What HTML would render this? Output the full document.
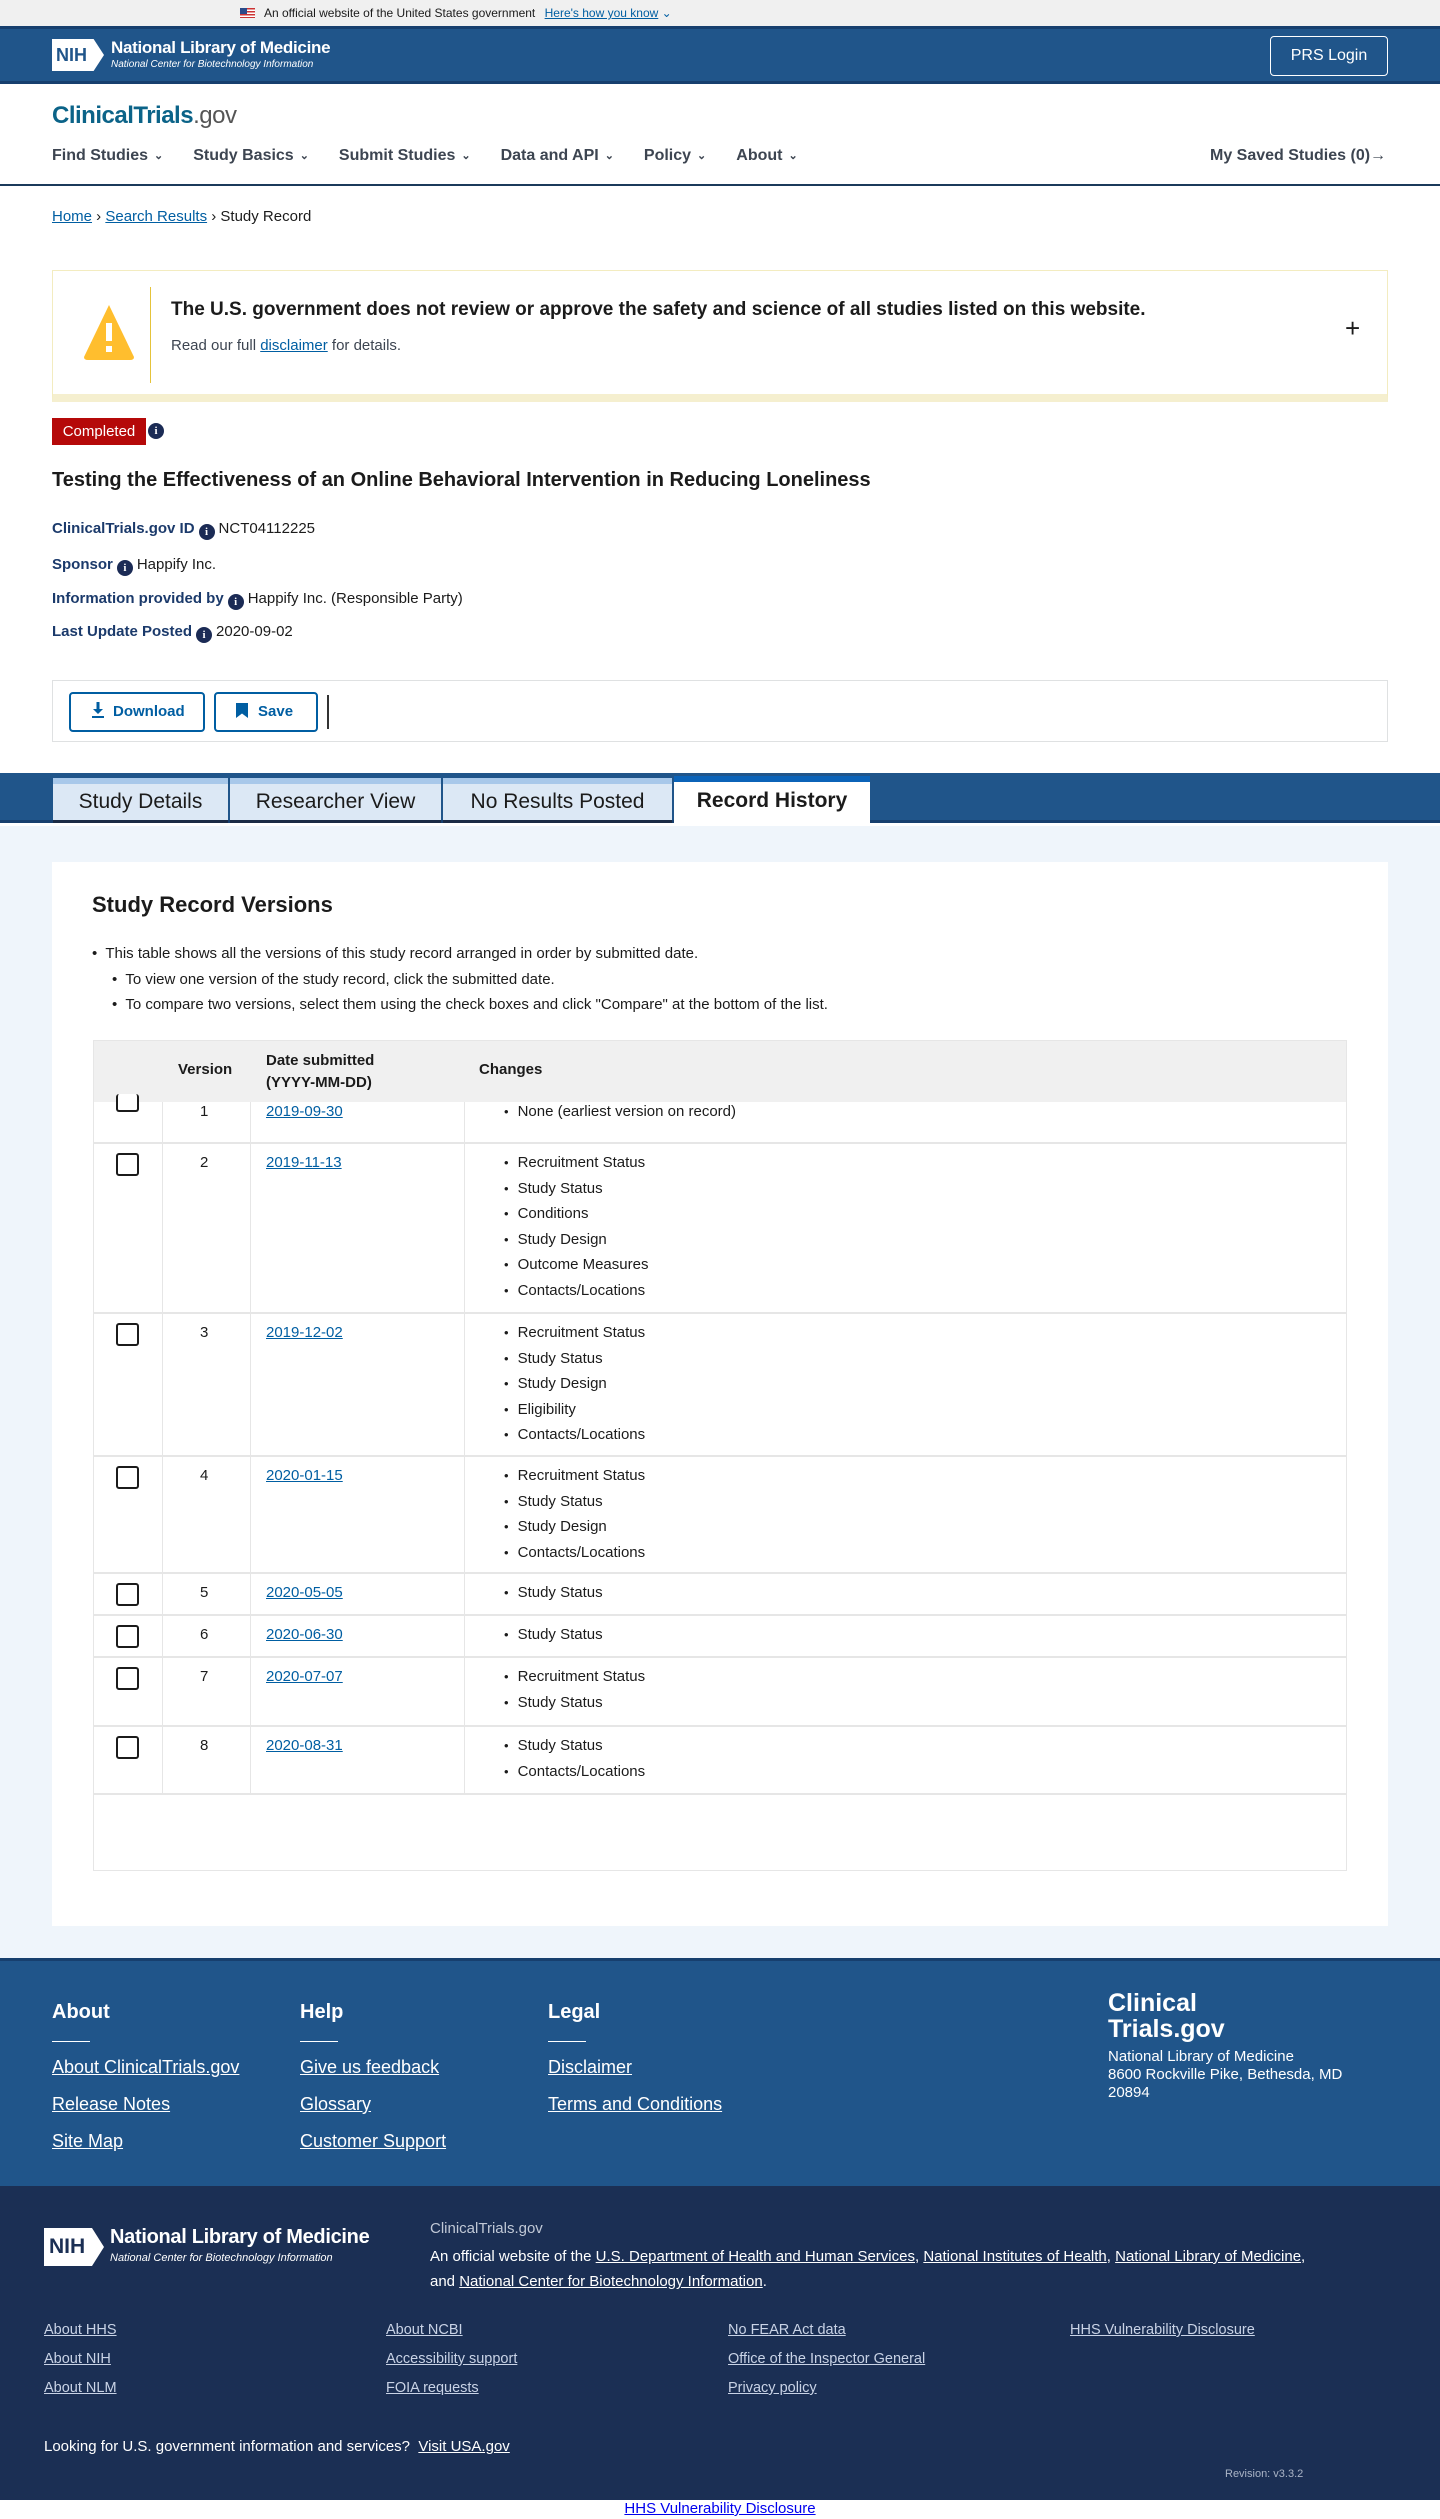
<!DOCTYPE html>
<html><head><meta charset="utf-8">
<style>
*{box-sizing:border-box;margin:0;padding:0}
body{width:1440px;height:2519px;position:relative;font-family:"Liberation Sans",Arial,sans-serif;color:#1b1b1b;font-size:16px;background:#fff;overflow:hidden}
.a{position:absolute}
a{color:#005ea2;text-decoration:underline}
.i{display:inline-block;width:16px;height:16px;border-radius:50%;background:#1b2b55;color:#fff;font:bold 11px/16px "Liberation Serif",serif;text-align:center;vertical-align:-2px;margin:0 4px}
.lbl{color:#1b3a6b;font-weight:bold;font-size:15px}
.row{position:absolute;left:0;width:100%;border-bottom:2px solid #e6e6e6}
.cb{position:absolute;left:22px;width:23px;height:23px;border:2px solid #1b1b1b;border-radius:3px;background:#fff}
.v{position:absolute;left:106px;font-size:15px}
.d{position:absolute;left:172px;font-size:15px}
.ch{position:absolute;left:410px;font-size:15px;line-height:25.5px;list-style:none}
.ch li:before{content:"•";margin-right:9px;font-size:13px}
.fl a{color:#fff;font-size:18px;display:block;margin-bottom:16px}
.fb a{color:#c9d3e6;font-size:14.5px;display:block;margin-bottom:13px}
.cv{font-size:11px;margin-left:6px;vertical-align:1px}
</style></head><body>

<div class="a" style="left:0;top:0;width:1440px;height:26px;background:#f0f0f0;font-size:12px;line-height:26px">
 <span class="a" style="left:240px;top:8px;width:15px;height:10px;background:repeating-linear-gradient(#c33 0 1.5px,#fff 1.5px 3px)"><span style="position:absolute;left:0;top:0;width:7px;height:6px;background:#2a4a8a"></span></span>
 <span class="a" style="left:264px">An official website of the United States government <a style="margin-left:6px">Here's how you know</a> <span style="color:#005ea2">⌄</span></span>
</div>
<div class="a" style="left:0;top:26px;width:1440px;height:58px;background:#20558a;border-top:3px solid #173f6e;border-bottom:3px solid #173f6e">
 <div class="a" style="left:52px;top:10px;width:52px;height:32px;background:#fff;color:#20558a;font:bold 18px/32px 'Liberation Sans';padding-left:4px;clip-path:polygon(0 0,80% 0,100% 50%,80% 100%,0 100%)">NIH</div>
 <div class="a" style="left:111px;top:9px;color:#fff;font-size:17px;font-weight:bold;letter-spacing:-0.3px">National Library of Medicine</div>
 <div class="a" style="left:111px;top:30px;color:#fff;font-size:10px;font-style:italic">National Center for Biotechnology Information</div>
 <div class="a" style="left:1270px;top:7px;width:118px;height:40px;border:1.5px solid #fff;border-radius:4px;color:#fff;font-size:16px;line-height:37px;text-align:center">PRS Login</div>
</div>
<div class="a" style="left:52px;top:102px;font-size:24px;font-weight:bold;color:#0b6388;letter-spacing:-0.5px">ClinicalTrials<span style="color:#555;font-weight:normal">.gov</span></div>
<div class="a" style="left:52px;top:147px;font-size:16px;font-weight:bold;color:#3d4551">
 <span style="margin-right:30px">Find Studies<span class="cv">⌄</span></span><span style="margin-right:30px">Study Basics<span class="cv">⌄</span></span><span style="margin-right:30px">Submit Studies<span class="cv">⌄</span></span><span style="margin-right:30px">Data and API<span class="cv">⌄</span></span><span style="margin-right:30px">Policy<span class="cv">⌄</span></span><span>About<span class="cv">⌄</span></span>
</div>
<div class="a" style="left:1210px;top:147px;font-size:16px;font-weight:bold;color:#3d4551">My Saved Studies (0)<span style="font-weight:normal">→</span></div>
<div class="a" style="left:0;top:184px;width:1440px;height:2px;background:#1b3a5b"></div>
<div class="a" style="left:52px;top:208px;font-size:15px"><a>Home</a> › <a>Search Results</a> › Study Record</div>

<div class="a" style="left:52px;top:270px;width:1336px;height:132px;border:1px solid #f3ecc0;border-bottom:8px solid #f5efcf;background:#fff">
 <svg class="a" style="left:29px;top:32px" width="54" height="58" viewBox="0 0 54 58"><path d="M27 2 L52 54 Q52 57 48 57 L6 57 Q2 57 2 54 Z" fill="#ffbe2e"/><rect x="24" y="20" width="6" height="18" fill="#fff"/><rect x="24" y="43" width="6" height="6" fill="#fff"/></svg>
 <div class="a" style="left:97px;top:16px;width:1px;height:96px;background:#e5c33a"></div>
 <div class="a" style="left:118px;top:28px;font-size:19px;font-weight:bold">The U.S. government does not review or approve the safety and science of all studies listed on this website.</div>
 <div class="a" style="left:118px;top:66px;font-size:15px;color:#3d4551">Read our full <a>disclaimer</a> for details.</div>
 <div class="a" style="left:1292px;top:42px;font-size:26px">+</div>
</div>

<div class="a" style="left:52px;top:418px;width:94px;height:27px;background:#b50909;color:#fff;font-size:15px;line-height:27px;text-align:center">Completed</div>
<span class="i a" style="left:148px;top:423px;margin:0">i</span>
<div class="a" style="left:52px;top:469px;font-size:20px;font-weight:bold;color:#1b1b1b">Testing the Effectiveness of an Online Behavioral Intervention in Reducing Loneliness</div>
<div class="a" style="left:52px;top:520px;font-size:15px"><span class="lbl">ClinicalTrials.gov ID</span><span class="i">i</span>NCT04112225</div>
<div class="a" style="left:52px;top:556px;font-size:15px"><span class="lbl">Sponsor</span><span class="i">i</span>Happify Inc.</div>
<div class="a" style="left:52px;top:590px;font-size:15px"><span class="lbl">Information provided by</span><span class="i">i</span>Happify Inc. (Responsible Party)</div>
<div class="a" style="left:52px;top:623px;font-size:15px"><span class="lbl">Last Update Posted</span><span class="i">i</span>2020-09-02</div>

<div class="a" style="left:52px;top:680px;width:1336px;height:62px;border:1px solid #dfe1e2">
 <div class="a" style="left:16px;top:11px;width:136px;height:40px;border:2px solid #005ea2;border-radius:4px;color:#005ea2;font-weight:bold;font-size:15px;line-height:36px;padding-left:20px"><svg width="14" height="16" viewBox="0 0 14 16" style="vertical-align:-2px;margin-right:8px"><path d="M5.5 0h3v7h3.5L7 12 2 7h3.5z" fill="#005ea2"/><rect x="1" y="14" width="12" height="2" fill="#005ea2"/></svg>Download</div>
 <div class="a" style="left:161px;top:11px;width:104px;height:40px;border:2px solid #005ea2;border-radius:4px;color:#005ea2;font-weight:bold;font-size:15px;line-height:36px;padding-left:20px"><span style="display:inline-block;width:12px;height:15px;background:#005ea2;clip-path:polygon(0 0,100% 0,100% 100%,50% 70%,0 100%);vertical-align:-2px;margin-right:10px"></span>Save</div>
 <div class="a" style="left:274px;top:14px;width:2px;height:34px;background:#333"></div>
</div>

<div class="a" style="left:0;top:773px;width:1440px;height:50px;background:#20558a;border-bottom:3px solid #173f6e"></div>
<div class="a" style="left:53px;top:778px;width:175px;height:45px;background:#dce8f5;border-top:6px solid #a8c8ea;border-bottom:3px solid #1b2b45;font-size:21px;line-height:36px;text-align:center">Study Details</div>
<div class="a" style="left:230px;top:778px;width:211px;height:45px;background:#dce8f5;border-top:6px solid #a8c8ea;border-bottom:3px solid #1b2b45;font-size:21px;line-height:36px;text-align:center">Researcher View</div>
<div class="a" style="left:443px;top:778px;width:229px;height:45px;background:#dce8f5;border-top:6px solid #a8c8ea;border-bottom:3px solid #1b2b45;font-size:21px;line-height:36px;text-align:center">No Results Posted</div>
<div class="a" style="left:674px;top:776px;width:196px;height:50px;background:#fff;border-top:6px solid #0b63b8;font-size:21px;font-weight:bold;line-height:38px;text-align:center">Record History</div>

<div class="a" style="left:0;top:826px;width:1440px;height:1134px;background:#eff5fb"></div>
<div class="a" style="left:52px;top:862px;width:1336px;height:1064px;background:#fff">
 <div class="a" style="left:40px;top:30px;font-size:22px;font-weight:bold">Study Record Versions</div>
 <div class="a" style="left:40px;top:79px;font-size:15px;line-height:25.5px">
  <div>•&nbsp; This table shows all the versions of this study record arranged in order by submitted date.</div>
  <div style="padding-left:20px">•&nbsp; To view one version of the study record, click the submitted date.</div>
  <div style="padding-left:20px">•&nbsp; To compare two versions, select them using the check boxes and click "Compare" at the bottom of the list.</div>
 </div>
 <div class="a" style="left:41px;top:178px;width:1254px;height:831px;border:1px solid #e6e6e6">
  <div class="a" style="left:68px;top:0;width:1px;height:752px;background:#e6e6e6"></div>
  <div class="a" style="left:156px;top:0;width:1px;height:752px;background:#e6e6e6"></div>
  <div class="a" style="left:370px;top:0;width:1px;height:752px;background:#e6e6e6"></div>
  <div class="row" style="top:0;height:61px;background:#f0f0f0;border:0;font-weight:bold;font-size:15px">
   <div class="a" style="left:84px;top:20px">Version</div>
   <div class="a" style="left:172px;top:9px;line-height:22px">Date submitted<br>(YYYY-MM-DD)</div>
   <div class="a" style="left:385px;top:20px">Changes</div>
  </div>
  <div class="row" style="top:61px;height:42px"><div class="cb" style="top:-8px;height:18px;border-top:0"></div><div class="v" style="top:1px">1</div><div class="d" style="top:1px"><a>2019-09-30</a></div><ul class="ch" style="top:-3px"><li>None (earliest version on record)</li></ul></div>
  <div class="row" style="top:103px;height:170px"><div class="cb" style="top:9px"></div><div class="v" style="top:10px">2</div><div class="d" style="top:10px"><a>2019-11-13</a></div><ul class="ch" style="top:6px"><li>Recruitment Status</li><li>Study Status</li><li>Conditions</li><li>Study Design</li><li>Outcome Measures</li><li>Contacts/Locations</li></ul></div>
  <div class="row" style="top:273px;height:143px"><div class="cb" style="top:9px"></div><div class="v" style="top:10px">3</div><div class="d" style="top:10px"><a>2019-12-02</a></div><ul class="ch" style="top:6px"><li>Recruitment Status</li><li>Study Status</li><li>Study Design</li><li>Eligibility</li><li>Contacts/Locations</li></ul></div>
  <div class="row" style="top:416px;height:117px"><div class="cb" style="top:9px"></div><div class="v" style="top:10px">4</div><div class="d" style="top:10px"><a>2020-01-15</a></div><ul class="ch" style="top:6px"><li>Recruitment Status</li><li>Study Status</li><li>Study Design</li><li>Contacts/Locations</li></ul></div>
  <div class="row" style="top:533px;height:42px"><div class="cb" style="top:9px"></div><div class="v" style="top:10px">5</div><div class="d" style="top:10px"><a>2020-05-05</a></div><ul class="ch" style="top:6px"><li>Study Status</li></ul></div>
  <div class="row" style="top:575px;height:42px"><div class="cb" style="top:9px"></div><div class="v" style="top:10px">6</div><div class="d" style="top:10px"><a>2020-06-30</a></div><ul class="ch" style="top:6px"><li>Study Status</li></ul></div>
  <div class="row" style="top:617px;height:69px"><div class="cb" style="top:9px"></div><div class="v" style="top:10px">7</div><div class="d" style="top:10px"><a>2020-07-07</a></div><ul class="ch" style="top:6px"><li>Recruitment Status</li><li>Study Status</li></ul></div>
  <div class="row" style="top:686px;height:68px"><div class="cb" style="top:9px"></div><div class="v" style="top:10px">8</div><div class="d" style="top:10px"><a>2020-08-31</a></div><ul class="ch" style="top:6px"><li>Study Status</li><li>Contacts/Locations</li></ul></div>
 </div>
</div>

<div class="a" style="left:0;top:1958px;width:1440px;height:228px;background:#20558a;border-top:3px solid #173f6e;color:#fff">
 <div class="a" style="left:52px;top:40px;font-size:20px;font-weight:bold">About</div>
 <div class="a" style="left:300px;top:40px;font-size:20px;font-weight:bold">Help</div>
 <div class="a" style="left:548px;top:40px;font-size:20px;font-weight:bold">Legal</div>
 <div class="a" style="left:52px;top:80px;width:38px;height:1px;background:#fff"></div>
 <div class="a" style="left:300px;top:80px;width:38px;height:1px;background:#fff"></div>
 <div class="a" style="left:548px;top:80px;width:38px;height:1px;background:#fff"></div>
 <div class="a fl" style="left:52px;top:96px"><a>About ClinicalTrials.gov</a><a>Release Notes</a><a>Site Map</a></div>
 <div class="a fl" style="left:300px;top:96px"><a>Give us feedback</a><a>Glossary</a><a>Customer Support</a></div>
 <div class="a fl" style="left:548px;top:96px"><a>Disclaimer</a><a>Terms and Conditions</a></div>
 <div class="a" style="left:1108px;top:29px;font-size:25px;font-weight:bold;line-height:26px">Clinical<br>Trials.gov</div>
 <div class="a" style="left:1108px;top:87px;font-size:15px;line-height:18px">National Library of Medicine<br>8600 Rockville Pike, Bethesda, MD<br>20894</div>
</div>
<div class="a" style="left:0;top:2186px;width:1440px;height:314px;background:#1b2f54;color:#fff">
 <div class="a" style="left:44px;top:42px;width:60px;height:38px;background:#fff;color:#1b2f54;font:bold 21px/38px 'Liberation Sans';padding-left:5px;clip-path:polygon(0 0,80% 0,100% 50%,80% 100%,0 100%)">NIH</div>
 <div class="a" style="left:110px;top:40px;font-size:20px;font-weight:bold;letter-spacing:-0.3px">National Library of Medicine</div>
 <div class="a" style="left:110px;top:66px;font-size:11px;font-style:italic">National Center for Biotechnology Information</div>
 <div class="a" style="left:430px;top:34px;font-size:15px;color:#c0c8d6">ClinicalTrials.gov</div>
 <div class="a" style="left:430px;top:58px;width:880px;font-size:15px;line-height:25px">An official website of the <a style="color:#fff">U.S. Department of Health and Human Services</a>, <a style="color:#fff">National Institutes of Health</a>, <a style="color:#fff">National Library of Medicine</a>, and <a style="color:#fff">National Center for Biotechnology Information</a>.</div>
 <div class="a fb" style="left:44px;top:136px"><a>About HHS</a><a>About NIH</a><a>About NLM</a></div>
 <div class="a fb" style="left:386px;top:136px"><a>About NCBI</a><a>Accessibility support</a><a>FOIA requests</a></div>
 <div class="a fb" style="left:728px;top:136px"><a>No FEAR Act data</a><a>Office of the Inspector General</a><a>Privacy policy</a></div>
 <div class="a fb" style="left:1070px;top:136px"><a>HHS Vulnerability Disclosure</a></div>
 <div class="a" style="left:44px;top:252px;font-size:15px">Looking for U.S. government information and services? &nbsp;<a style="color:#fff">Visit USA.gov</a></div>
 <div class="a" style="left:1225px;top:282px;font-size:11px;color:#aab4c6">Revision: v3.3.2</div>
</div>
<div class="a" style="left:0;top:2500px;width:1440px;text-align:center;font-size:15px"><a style="color:#0000ee">HHS Vulnerability Disclosure</a></div>
</body></html>
